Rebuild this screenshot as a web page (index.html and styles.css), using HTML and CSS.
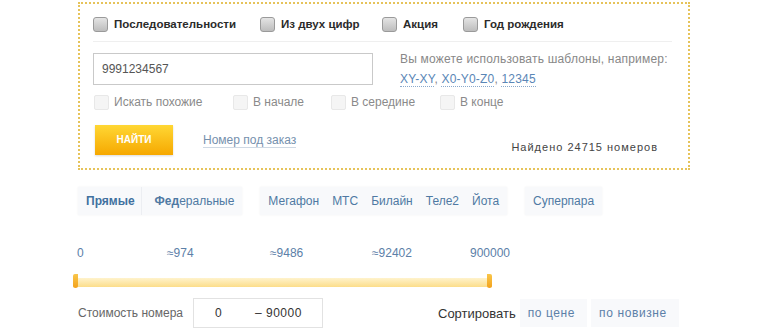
FILE: index.html
```html
<!DOCTYPE html>
<html lang="ru">
<head>
    <meta charset="UTF-8">
    <title>Поиск номеров</title>
    <link rel="stylesheet" href="styles.css">
</head>
<body>

    <div class="pagina">
        <div class="buscador">
            <div class="fila-tipos">
                <label class="opcion"><span class="caja"></span>Последовательности</label>
                <label class="opcion"><span class="caja"></span>Из двух цифр</label>
                <label class="opcion"><span class="caja"></span>Акция</label>
                <label class="opcion"><span class="caja"></span>Год рождения</label>
            </div>

            <div class="fila-campo">
                <div class="campo">9991234567</div>
                <div class="ayuda">
                    Вы можете использовать шаблоны, например:<br>
                    <a class="plantilla">XY-XY</a>, <a class="plantilla">X0-Y0-Z0</a>, <a class="plantilla">12345</a>
                </div>
            </div>

            <div class="fila-modo">
                <label class="modo"><span class="caja clara"></span>Искать похожие</label>
                <label class="modo"><span class="caja clara"></span>В начале</label>
                <label class="modo"><span class="caja clara"></span>В середине</label>
                <label class="modo"><span class="caja clara"></span>В конце</label>
            </div>

            <div class="fila-boton">
                <div class="boton">НАЙТИ</div>
                <a class="pedido">Номер под заказ</a>
                <div class="encontrado">Найдено 24715 номеров</div>
            </div>
        </div>

        <div class="pestanas">
            <div class="grupo">
                <span class="pestana activa">Прямые</span>
                <span class="pestana"><b>Фед</b>еральные</span>
            </div>
            <div class="grupo">
                <span class="pestana">Мегафон</span>
                <span class="pestana">МТС</span>
                <span class="pestana">Билайн</span>
                <span class="pestana">Теле2</span>
                <span class="pestana">Йота</span>
            </div>
            <div class="grupo">
                <span class="pestana">Суперпара</span>
            </div>
        </div>

        <div class="escala">
            <span>0</span>
            <span>≈974</span>
            <span>≈9486</span>
            <span>≈92402</span>
            <span>900000</span>
        </div>
        <div class="barra">
            <span class="tirador izq"></span>
            <span class="tirador der"></span>
        </div>

        <div class="fila-precio">
            <span class="etiqueta">Стоимость номера</span>
            <div class="rango">
                <span class="desde">0</span>
                <span class="hasta">– 90000</span>
            </div>
            <span class="ordenar">Сортировать</span>
            <span class="orden">по цене</span>
            <span class="orden">по новизне</span>
        </div>
    </div>

</body>
</html>
```

FILE: styles.css
```css
body {
    margin: 0;
    background: #fff;
    font-family: "Liberation Sans", Arial, sans-serif;
    font-size: 12px;
    color: #333;
}
.pagina {
    padding: 2px 0 0 78px;
    width: 612px;
}
.buscador {
    border: 2px dotted #e6c35a;
    height: 164px;
    padding: 0 16px 0 13px;
}
.fila-tipos {
    display: grid;
    grid-template-columns: 167px 122px 81px auto;
    align-items: center;
    height: 34px;
    padding-top: 3px;
    border-bottom: 1px solid #efefef;
}
.opcion {
    display: flex;
    align-items: center;
    font-weight: bold;
    font-size: 11.5px;
    color: #2b2b2b;
}
.caja {
    width: 13px;
    height: 13px;
    border: 1px solid #9a9a9a;
    border-radius: 3px;
    background: linear-gradient(#e4e4e4, #bdbdbd);
    margin-right: 6px;
}
.caja.clara {
    border-color: #e8e8e8;
    background: #f5f5f5;
    border-radius: 2px;
    margin-right: 5px;
}
.fila-campo {
    display: flex;
    margin-top: 11px;
}
.campo {
    width: 270px;
    height: 30px;
    border: 1px solid #c9c9c9;
    padding-left: 8px;
    line-height: 30px;
    color: #555;
}
.ayuda {
    margin-left: 27px;
    color: #888;
    line-height: 20px;
    margin-top: -4px;
    letter-spacing: 0.2px;
}
.plantilla {
    color: #5a86b6;
    border-bottom: 1px dotted #8aa9cc;
}
.fila-modo {
    display: grid;
    grid-template-columns: 139px 98px 109px auto;
    align-items: center;
    margin-top: 4px;
    height: 18px;
    padding-left: 1px;
    color: #8a8a8a;
}
.modo {
    display: flex;
    align-items: center;
}
.fila-boton {
    display: flex;
    align-items: center;
    margin-top: 14px;
    padding-left: 2px;
}
.boton {
    width: 78px;
    height: 30px;
    line-height: 30px;
    text-align: center;
    color: #fff;
    font-size: 10px;
    font-weight: bold;
    background: linear-gradient(#ffd734, #f6a800);
    box-shadow: 0 1px 2px rgba(0, 0, 0, 0.15);
}
.pedido {
    margin-left: 30px;
    color: #7590ad;
    border-bottom: 1px solid #cfd9e4;
    line-height: 14px;
}
.encontrado {
    margin-left: auto;
    margin-top: 14px;
    color: #444;
    font-size: 11px;
    letter-spacing: 1px;
    margin-right: 14px;
}
.pestanas {
    display: flex;
    margin-top: 17px;
    gap: 18px;
}
.grupo {
    display: flex;
    background: #f8f9fb;
    box-shadow: 0 0 2px rgba(0, 0, 0, 0.06);
    height: 28px;
    align-items: center;
    padding: 0 8px;
    gap: 13px;
}
.pestana {
    color: #4f79a3;
}
.pestana.activa {
    font-weight: bold;
    color: #41719f;
    padding-right: 6px;
    border-right: 1px solid #eceef2;
    line-height: 28px;
}
.escala {
    display: grid;
    grid-template-columns: 90px 103px 102px 98px auto;
    color: #5c80a8;
    margin-top: 31px;
    height: 14px;
    margin-left: -1px;
}
.barra {
    position: relative;
    margin: 18px 0 0 -5px;
    width: 419px;
    height: 9px;
    background: linear-gradient(#fff3cc, #fcdd8a);
}
.tirador {
    position: absolute;
    top: -4px;
    width: 5px;
    height: 14px;
    background: linear-gradient(#f9c64a, #f3a21c);
}
.tirador.izq {
    left: 0;
    border-radius: 3px 0 4px 4px;
}
.tirador.der {
    right: 0;
    border-radius: 0 3px 4px 4px;
}
.fila-precio {
    display: flex;
    align-items: center;
    margin-top: 11px;
}
.etiqueta {
    color: #666;
    width: 115px;
}
.rango {
    display: flex;
    align-items: center;
    width: 128px;
    height: 28px;
    border: 1px solid #e2e2e2;
    color: #333;
}
.desde {
    margin-left: 21px;
    width: 40px;
}
.hasta {
    letter-spacing: 0.5px;
}
.ordenar {
    margin-left: 115px;
    font-size: 13px;
    color: #333;
}
.orden {
    color: #5c80a8;
    background: #f8f9fb;
    height: 28px;
    line-height: 28px;
    padding: 0 12px 0 8px;
    margin-left: 4px;
    letter-spacing: 0.6px;
}
```
